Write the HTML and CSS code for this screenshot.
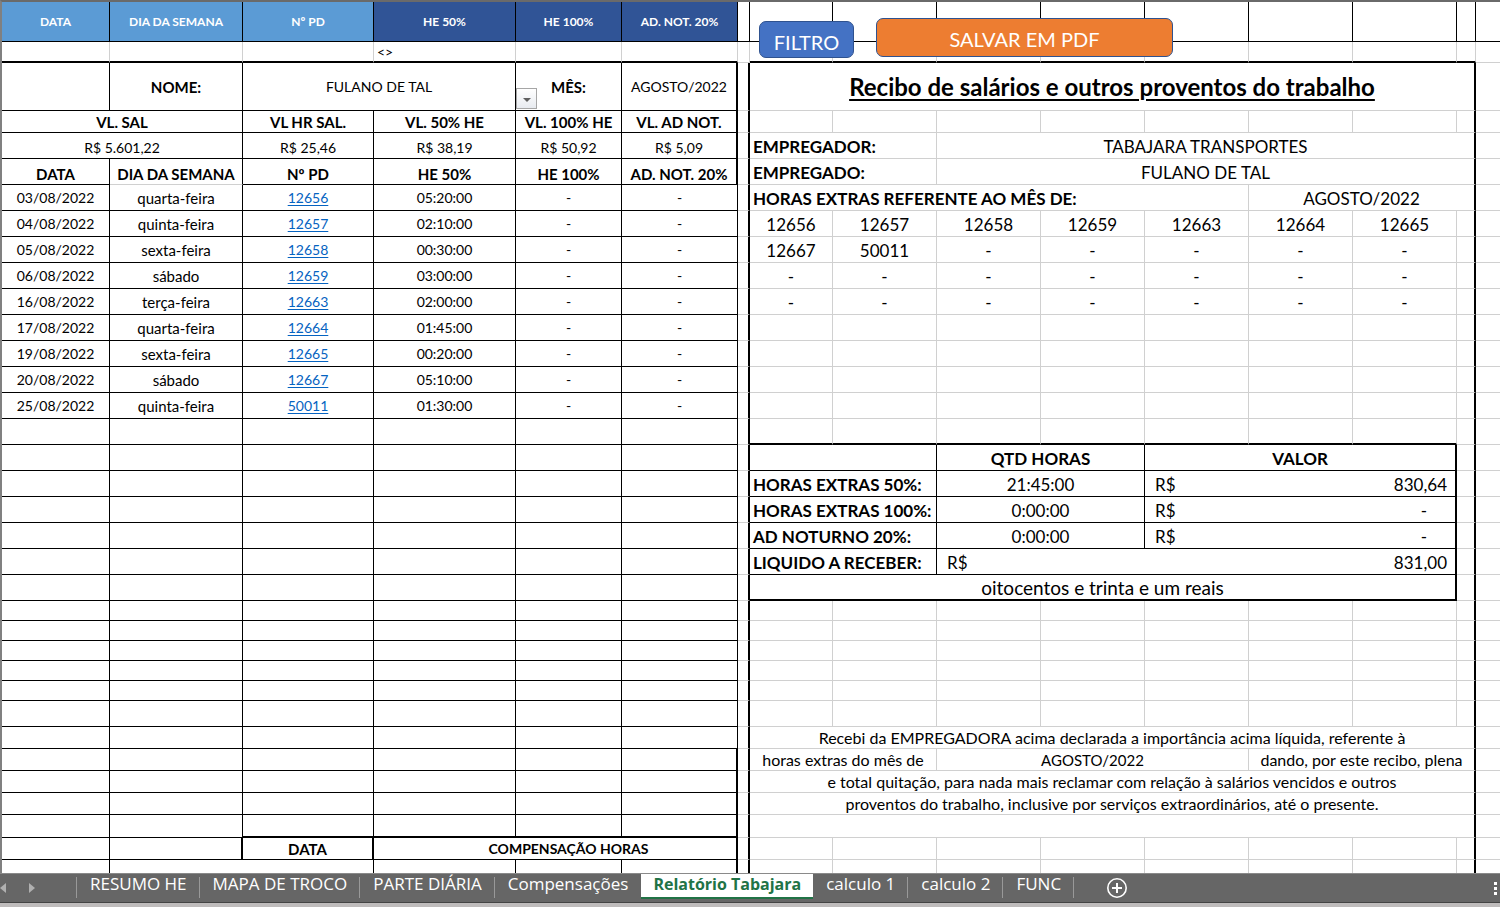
FILE: index.html
```html
<!DOCTYPE html>
<html lang="pt-BR">
<head>
<meta charset="utf-8">
<title>Relatório Tabajara</title>
<link rel="stylesheet" href="styles.css">
</head>
<body>
<main class="sheet">
<table class="report">
<colgroup><col class="w-a"><col class="w-b"><col class="w-c"><col class="w-d"><col class="w-e"><col class="w-f"></colgroup>
<tbody>
<tr class="r40 head"><th class="light">DATA</th><th class="light">DIA DA SEMANA</th><th class="light">Nº PD</th><th class="dark">HE 50%</th><th class="dark">HE 100%</th><th class="dark">AD. NOT. 20%</th></tr>
<tr class="r21 criteria"><td></td><td></td><td></td><td class="left">&lt;&gt;</td><td></td><td></td></tr>
<tr class="r48"><td></td><th>NOME:</th><td colspan="2">FULANO DE TAL</td><th class="has-picker"><button class="picker" type="button" aria-label="Escolher nome"></button>MÊS:</th><td class="thick-r">AGOSTO/2022</td></tr>
<tr class="r22"><th colspan="2">VL. SAL</th><th>VL HR SAL.</th><th>VL. 50% HE</th><th>VL. 100% HE</th><th class="thick-r">VL. AD NOT.</th></tr>
<tr class="r26 low"><td colspan="2">R$ 5.601,22</td><td>R$ 25,46</td><td>R$ 38,19</td><td>R$ 50,92</td><td class="thick-r">R$ 5,09</td></tr>
<tr class="r26 low"><th>DATA</th><th class="faint-b">DIA DA SEMANA</th><th>Nº PD</th><th>HE 50%</th><th>HE 100%</th><th class="thick-r">AD. NOT. 20%</th></tr>
<tr class="r26"><td>03/08/2022</td><td class="day">quarta-feira</td><td><a href="#pd-12656">12656</a></td><td>05:20:00</td><td>-</td><td>-</td></tr>
<tr class="r26"><td>04/08/2022</td><td class="day">quinta-feira</td><td><a href="#pd-12657">12657</a></td><td>02:10:00</td><td>-</td><td>-</td></tr>
<tr class="r26"><td>05/08/2022</td><td class="day">sexta-feira</td><td><a href="#pd-12658">12658</a></td><td>00:30:00</td><td>-</td><td>-</td></tr>
<tr class="r26"><td>06/08/2022</td><td class="day">sábado</td><td><a href="#pd-12659">12659</a></td><td>03:00:00</td><td>-</td><td>-</td></tr>
<tr class="r26"><td>16/08/2022</td><td class="day">terça-feira</td><td><a href="#pd-12663">12663</a></td><td>02:00:00</td><td>-</td><td>-</td></tr>
<tr class="r26"><td>17/08/2022</td><td class="day">quarta-feira</td><td><a href="#pd-12664">12664</a></td><td>01:45:00</td><td>-</td><td>-</td></tr>
<tr class="r26"><td>19/08/2022</td><td class="day">sexta-feira</td><td><a href="#pd-12665">12665</a></td><td>00:20:00</td><td>-</td><td>-</td></tr>
<tr class="r26"><td>20/08/2022</td><td class="day">sábado</td><td><a href="#pd-12667">12667</a></td><td>05:10:00</td><td>-</td><td>-</td></tr>
<tr class="r26"><td>25/08/2022</td><td class="day">quinta-feira</td><td><a href="#pd-50011">50011</a></td><td>01:30:00</td><td>-</td><td>-</td></tr>
<tr class="r26"><td></td><td></td><td></td><td></td><td></td><td></td></tr>
<tr class="r26"><td></td><td></td><td></td><td></td><td></td><td></td></tr>
<tr class="r26"><td></td><td></td><td></td><td></td><td></td><td></td></tr>
<tr class="r26"><td></td><td></td><td></td><td></td><td></td><td></td></tr>
<tr class="r26"><td></td><td></td><td></td><td></td><td></td><td></td></tr>
<tr class="r26"><td></td><td></td><td></td><td></td><td></td><td></td></tr>
<tr class="r26"><td></td><td></td><td></td><td></td><td></td><td></td></tr>
<tr class="r20"><td></td><td></td><td></td><td></td><td></td><td></td></tr>
<tr class="r20"><td></td><td></td><td></td><td></td><td></td><td></td></tr>
<tr class="r20"><td></td><td></td><td></td><td></td><td></td><td></td></tr>
<tr class="r20"><td></td><td></td><td></td><td></td><td></td><td></td></tr>
<tr class="r20"><td></td><td></td><td></td><td></td><td></td><td></td></tr>
<tr class="r26"><td></td><td></td><td></td><td></td><td></td><td></td></tr>
<tr class="r22"><td></td><td></td><td></td><td></td><td></td><td></td></tr>
<tr class="r22"><td></td><td></td><td></td><td></td><td></td><td class="thick-r"></td></tr>
<tr class="r22"><td></td><td></td><td></td><td></td><td></td><td class="thick-r"></td></tr>
<tr class="r22"><td></td><td></td><td></td><td></td><td></td><td class="thick-r"></td></tr>
<tr class="r23"><td></td><td></td><td class="thick-b"></td><td class="thick-b"></td><td class="thick-b"></td><td class="thick-r thick-b"></td></tr>
<tr class="r22"><td></td><td class="thick-r"></td><th class="thick-r">DATA</th><th class="thick-r offsets" colspan="3">COMPENSAÇÃO HORAS</th></tr>
<tr class="r22"><td></td><td colspan="2"></td><td></td><td></td><td class="thick-r"></td></tr>
</tbody>
</table>
<table class="receipt">
<colgroup><col class="w-g"><col class="w-h"><col class="w-i"><col class="w-i"><col class="w-i"><col class="w-i"><col class="w-i"><col class="w-i"><col class="w-o"><col></colgroup>
<tbody>
<tr class="r40 ink"><td></td><td></td><td></td><td></td><td></td><td></td><td></td><td></td><td></td><td></td></tr>
<tr class="r21 spacer"><td></td><td class="thick-b"></td><td class="thick-b"></td><td class="thick-b"></td><td class="thick-b"></td><td class="thick-b"></td><td class="thick-b"></td><td class="thick-b"></td><td class="thick-b"></td><td></td></tr>
<tr class="r48"><td></td><th class="title edge" colspan="8">Recibo de salários e outros proventos do trabalho</th><td></td></tr>
<tr class="r22"><td></td><td></td><td></td><td></td><td></td><td></td><td></td><td></td><td class="edge"></td><td></td></tr>
<tr class="r26"><td></td><th class="left" colspan="2">EMPREGADOR:</th><td class="edge" colspan="6">TABAJARA TRANSPORTES</td><td></td></tr>
<tr class="r26"><td></td><th class="left" colspan="2">EMPREGADO:</th><td class="edge" colspan="6">FULANO DE TAL</td><td></td></tr>
<tr class="r26"><td></td><th class="left" colspan="5">HORAS EXTRAS REFERENTE AO MÊS DE:</th><td class="edge" colspan="3">AGOSTO/2022</td><td></td></tr>
<tr class="r26"><td></td><td>12656</td><td>12657</td><td>12658</td><td>12659</td><td>12663</td><td>12664</td><td>12665</td><td class="edge"></td><td></td></tr>
<tr class="r26"><td></td><td>12667</td><td>50011</td><td>-</td><td>-</td><td>-</td><td>-</td><td>-</td><td class="edge"></td><td></td></tr>
<tr class="r26"><td></td><td>-</td><td>-</td><td>-</td><td>-</td><td>-</td><td>-</td><td>-</td><td class="edge"></td><td></td></tr>
<tr class="r26"><td></td><td>-</td><td>-</td><td>-</td><td>-</td><td>-</td><td>-</td><td>-</td><td class="edge"></td><td></td></tr>
<tr class="r26"><td></td><td></td><td></td><td></td><td></td><td></td><td></td><td></td><td class="edge"></td><td></td></tr>
<tr class="r26"><td></td><td></td><td></td><td></td><td></td><td></td><td></td><td></td><td class="edge"></td><td></td></tr>
<tr class="r26"><td></td><td></td><td></td><td></td><td></td><td></td><td></td><td></td><td class="edge"></td><td></td></tr>
<tr class="r26"><td></td><td></td><td></td><td></td><td></td><td></td><td></td><td></td><td class="edge"></td><td></td></tr>
<tr class="r26"><td></td><td class="thick-b"></td><td class="thick-b"></td><td class="thick-b"></td><td class="thick-b"></td><td class="thick-b"></td><td class="thick-b"></td><td class="thick-b"></td><td class="edge"></td><td></td></tr>
<tr class="r26"><td></td><td class="box" colspan="2"></td><th class="box" colspan="2">QTD HORAS</th><th class="box edge" colspan="3">VALOR</th><td class="edge"></td><td></td></tr>
<tr class="r26"><td></td><th class="box left" colspan="2">HORAS EXTRAS 50%:</th><td class="box" colspan="2">21:45:00</td><td class="box edge" colspan="3"><div class="money"><span>R$</span><span>830,64</span></div></td><td class="edge"></td><td></td></tr>
<tr class="r26"><td></td><th class="box left" colspan="2">HORAS EXTRAS 100%:</th><td class="box" colspan="2">0:00:00</td><td class="box edge" colspan="3"><div class="money nil"><span>R$</span><span>-</span></div></td><td class="edge"></td><td></td></tr>
<tr class="r26"><td></td><th class="box left" colspan="2">AD NOTURNO 20%:</th><td class="box" colspan="2">0:00:00</td><td class="box edge" colspan="3"><div class="money nil"><span>R$</span><span>-</span></div></td><td class="edge"></td><td></td></tr>
<tr class="r26"><td></td><th class="box left" colspan="2">LIQUIDO A RECEBER:</th><td class="box edge" colspan="5"><div class="money"><span>R$</span><span>831,00</span></div></td><td class="edge"></td><td></td></tr>
<tr class="r26"><td></td><td class="thick-b edge words" colspan="7">oitocentos e trinta e um reais</td><td class="edge"></td><td></td></tr>
<tr class="r20"><td></td><td></td><td></td><td></td><td></td><td></td><td></td><td></td><td class="edge"></td><td></td></tr>
<tr class="r20"><td></td><td></td><td></td><td></td><td></td><td></td><td></td><td></td><td class="edge"></td><td></td></tr>
<tr class="r20"><td></td><td></td><td></td><td></td><td></td><td></td><td></td><td></td><td class="edge"></td><td></td></tr>
<tr class="r20"><td></td><td></td><td></td><td></td><td></td><td></td><td></td><td></td><td class="edge"></td><td></td></tr>
<tr class="r20"><td></td><td></td><td></td><td></td><td></td><td></td><td></td><td></td><td class="edge"></td><td></td></tr>
<tr class="r26"><td></td><td></td><td></td><td></td><td></td><td></td><td></td><td></td><td class="edge"></td><td></td></tr>
<tr class="r22 note"><td></td><td class="edge" colspan="8">Recebi da EMPREGADORA acima declarada a importância acima líquida, referente à</td><td></td></tr>
<tr class="r22 note"><td></td><td colspan="2">horas extras do mês de</td><td class="month" colspan="3">AGOSTO/2022</td><td class="edge" colspan="3">dando, por este recibo, plena</td><td></td></tr>
<tr class="r22 note"><td></td><td class="edge" colspan="8">e total quitação, para nada mais reclamar com relação à salários vencidos e outros</td><td></td></tr>
<tr class="r22 note"><td></td><td class="edge" colspan="8">proventos do trabalho, inclusive por serviços extraordinários, até o presente.</td><td></td></tr>
<tr class="r23"><td></td><td class="edge" colspan="8"></td><td></td></tr>
<tr class="r22"><td></td><td></td><td></td><td></td><td></td><td></td><td></td><td></td><td class="edge"></td><td></td></tr>
<tr class="r22"><td></td><td></td><td></td><td></td><td></td><td></td><td></td><td></td><td class="edge"></td><td></td></tr>
</tbody>
</table>
<button class="shape filter" type="button">FILTRO</button>
<button class="shape save" type="button">SALVAR EM PDF</button>
</main>
<nav class="tabs" aria-label="Planilhas">
<div class="arrows">
<button type="button" aria-label="Anterior"><svg width="6" height="10" viewBox="0 0 6 10"><path d="M6 0v10L0 5z"/></svg></button>
<button type="button" aria-label="Próxima"><svg width="6" height="10" viewBox="0 0 6 10"><path d="M0 0v10l6-5z"/></svg></button>
</div>
<button class="tab" type="button">RESUMO HE</button>
<button class="tab" type="button">MAPA DE TROCO</button>
<button class="tab" type="button">PARTE DIÁRIA</button>
<button class="tab last" type="button">Compensações</button>
<button class="tab active" type="button">Relatório Tabajara</button>
<button class="tab" type="button">calculo 1</button>
<button class="tab" type="button">calculo 2</button>
<button class="tab" type="button">FUNC</button>
<button class="add" type="button" aria-label="Nova planilha"><svg width="22" height="22" viewBox="0 0 22 22"><circle cx="11" cy="11" r="9.2" fill="none" stroke="#fff" stroke-width="1.6"/><path d="M11 6v10M6 11h10" stroke="#fff" stroke-width="2"/></svg></button>
<span class="grip"><i></i><i></i><i></i></span>
</nav>
<footer class="status"></footer>
</body>
</html>
```
FILE: styles.css
```css
* { box-sizing: border-box; }

body {
  margin: 0;
  height: 100vh;
  display: flex;
  flex-direction: column;
  overflow: hidden;
  background: #fff;
  color: #000;
  font-family: Lato, "Open Sans", sans-serif;
}

button { font-family: inherit; padding: 0; border: 0; background: none; }

.sheet {
  position: relative;
  flex: 1;
  min-height: 0;
  overflow: hidden;
  display: flex;
  align-items: flex-start;
  border-top: 2px solid #6a6a6a;
  border-left: 2px solid #808080;
}

table { table-layout: fixed; border-collapse: separate; border-spacing: 0; }
.report { flex: none; width: 736px; font-size: 14px; }
.receipt { flex: 1; width: 0; font-size: 17px; }

.w-a { width: 108px; }
.w-b { width: 133px; }
.w-c { width: 131px; }
.w-d { width: 142px; }
.w-e { width: 106px; }
.w-f { width: 116px; }
.w-g { width: 12px; }
.w-h { width: 83px; }
.w-i { width: 104px; }
.w-o { width: 19px; }

.r20 { height: 20px; }
.r21 { height: 21px; }
.r22 { height: 22px; }
.r23 { height: 23px; }
.r26 { height: 26px; }
.r40 { height: 40px; }
.r48 { height: 48px; }

td, th {
  padding: 0 3px;
  line-height: 18px;
  text-align: center;
  vertical-align: middle;
  white-space: nowrap;
  border: 0 solid #d0d0d0;
  border-right-width: 1px;
  border-bottom-width: 1px;
}

.report td, .report th { border-color: #000; }
.report th, .report .day { font-size: 15px; }
.report .head th { font-size: 12px; color: #fff; }
.report .offsets { font-size: 14px; padding-left: 30px; }
.report .criteria td { border-right-color: #d0d0d0; border-bottom-width: 2px; }
.report .faint-b { border-bottom-color: #d0d0d0; }
.report .low td, .report .low th { padding-top: 4px; }
.light { background: #5b9bd5; }
.dark { background: #305496; }
.report a { color: #0563c1; text-underline-offset: 2px; }

.receipt .r26 td, .receipt .r26 th { padding-top: 2px; }
.left { text-align: left; }
.thick-r { border-right-width: 2px; }
.thick-b { border-bottom: 2px solid #000; }

.receipt td:first-child { border-right: 2px solid #000; }
.receipt .ink td { border-color: #000; border-right-width: 1px; }
.receipt .spacer td:first-child { border-right: 1px solid #d0d0d0; }
.receipt td:last-child { border-right: 0; }
.edge { border-right: 2px solid #000; }
.receipt .box { border-bottom-color: #000; border-right-color: #000; }
.title { font-size: 24px; line-height: 28px; text-decoration: underline; text-decoration-thickness: 2px; text-underline-offset: 3px; }
.words { font-size: 19px; }
.note { font-size: 16px; }
.month { font-size: 15px; }
.money { display: flex; justify-content: space-between; padding: 0 5px 0 7px; }
.nil { padding-right: 25px; }

.has-picker { position: relative; }
.picker {
  position: absolute;
  left: 0;
  bottom: 1px;
  width: 21px;
  height: 21px;
  border: 1px solid #a6a6a6;
  background: linear-gradient(#fff, #e8ebf0);
}
.picker::after {
  content: "";
  display: block;
  width: 0;
  margin: 2px auto 0;
  border: 4px solid transparent;
  border-top-color: #606060;
  border-bottom: 0;
}

.shape {
  position: absolute;
  color: #fff;
  font-size: 20px;
  line-height: 24px;
  border: 1px solid #2f528f;
  border-radius: 7px;
}
.filter { left: 757px; top: 19px; width: 95px; height: 37px; padding-top: 4px; background: #4472c4; }
.save { left: 874px; top: 16px; width: 297px; height: 39px; padding-top: 3px; background: #ed7d31; }

.tabs {
  flex: none;
  height: 29px;
  display: flex;
  align-items: stretch;
  background: #666;
  border-top: 1px solid #8a8a8a;
  font-family: "Open Sans", "Noto Sans", sans-serif;
}
.arrows { position: relative; width: 77px; display: flex; align-items: center; gap: 23px; }
.arrows svg { display: block; fill: #b0b0b0; }
.tab {
  position: relative;
  color: #fff;
  font-size: 17px;
  line-height: 20px;
  padding: 0 13px 8px;
}
.tab::after, .arrows::after {
  content: "";
  position: absolute;
  right: 0;
  top: 3px;
  bottom: 4px;
  width: 1px;
  background: #999;
}
.last::after, .active::after { display: none; }
.active {
  font-size: 16px;
  padding: 0 12px 3px;
  margin-bottom: 3px;
  background: #fff;
  color: #217346;
  font-weight: 700;
  border-bottom: 2px solid #217346;
}
.add { margin-left: 32px; }
.add svg { display: block; }
.grip { margin-left: auto; padding-right: 3px; display: flex; flex-direction: column; justify-content: center; gap: 2px; }
.grip i { width: 3px; height: 3px; background: #fff; }

.status { flex: none; height: 5px; background: #bfbcbc; border-top: 1px solid #444; }
```
